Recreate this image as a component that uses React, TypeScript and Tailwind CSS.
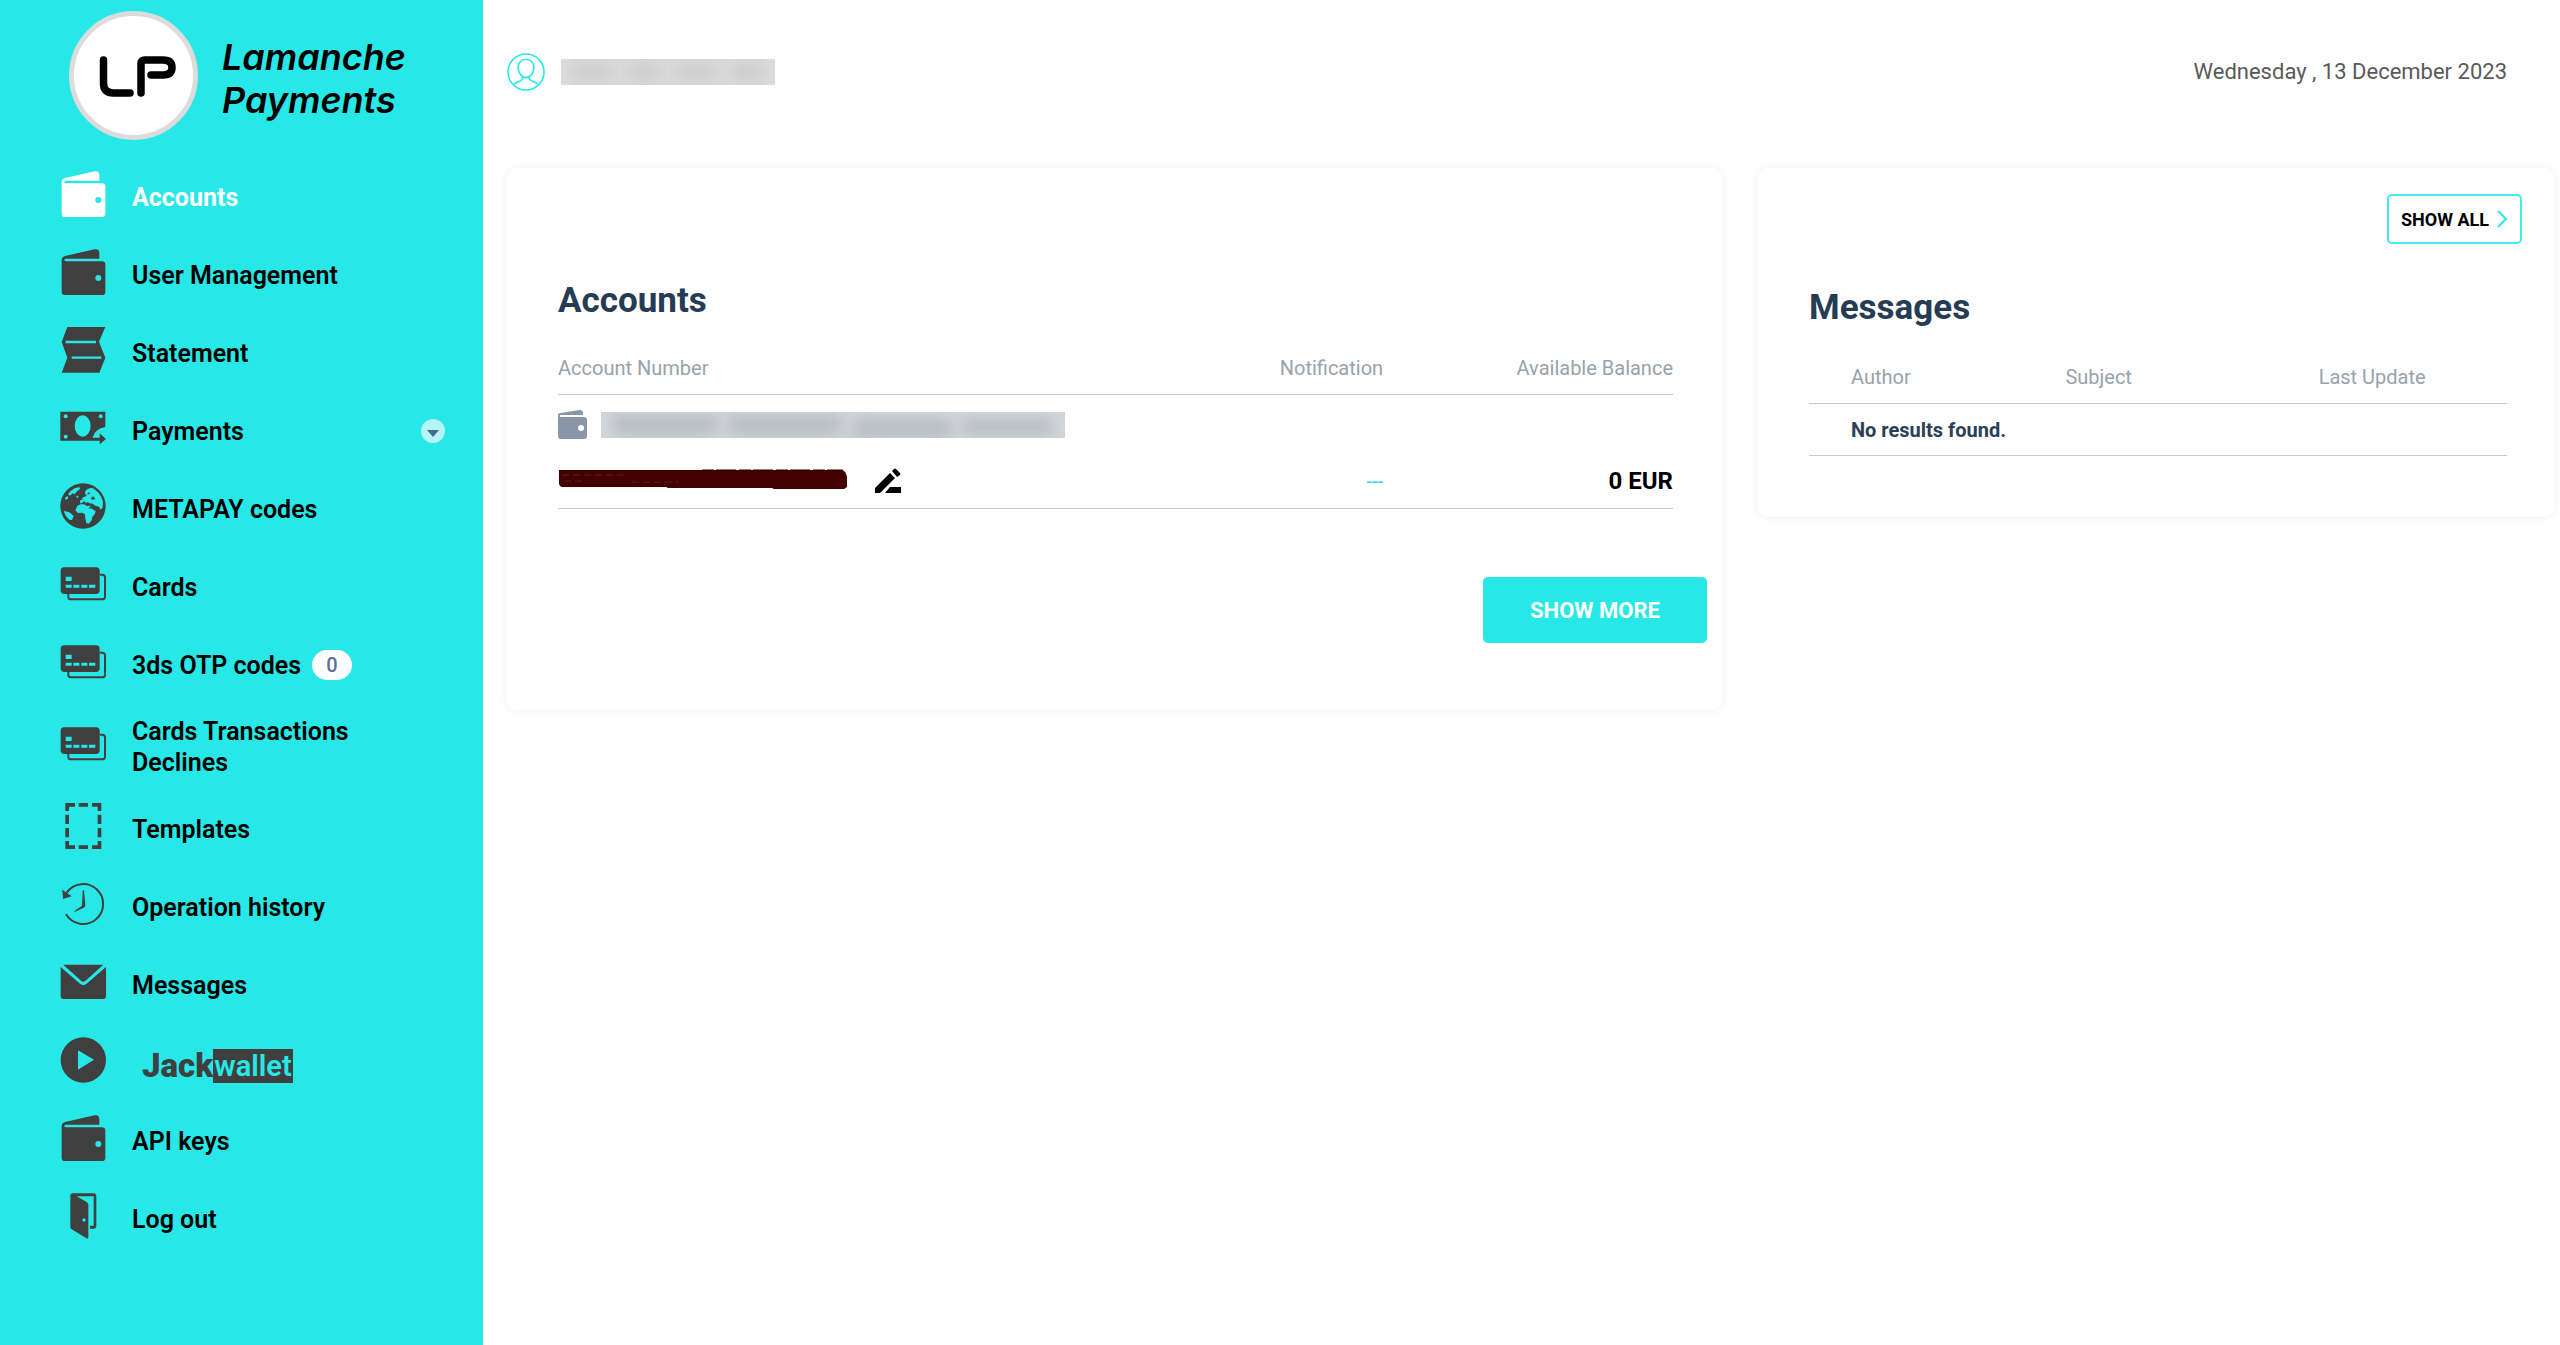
import { ReactNode } from "react";

function Svg({ children }: { children: ReactNode }) {
    return (
        <svg viewBox="0 0 138 138" className="size-full" fill="currentColor" aria-hidden="true">
            {children}
        </svg>
    );
}

function WalletIcon() {
    return (
        <Svg>
            <path
                fillRule="evenodd"
                d="M5 128V34q0-10 10-13L104 1q13-2 14 10V29H18q-5 0-5 4t5 4H126q10 0 10 10V128q0 10-10 10H15q-10 0-10-10ZM106 87a9 9 0 1 0 18 0a9 9 0 1 0-18 0Z"
            />
        </Svg>
    );
}

function StatementIcon() {
    return (
        <Svg>
            <path d="M22 0H136L117 44L136 92L118 137H5L22 92L5 45Z" />
            <path d="M17 45H108M35 92H124" stroke="#27e8e7" strokeWidth="7" />
        </Svg>
    );
}

function PaymentsIcon() {
    return (
        <Svg>
            <path d="M1 20H136V66Q106 70 97 98H119V85L138 102L119 118V107H1Z" />
            <g fill="#27e8e7">
                <ellipse cx="68" cy="63" rx="24" ry="32" />
                <circle cx="17" cy="34" r="6" />
                <circle cx="122" cy="34" r="6" />
                <circle cx="17" cy="95" r="6" />
            </g>
        </Svg>
    );
}

function GlobeIcon() {
    return (
        <Svg>
            <circle cx="69" cy="69" r="68" />
            <g fill="#27e8e7">
                {/* Europe and Asia */}
                <path d="M84 17L96 14Q122 27 129 56L128 74L122 80L117 71L106 68L98 62L88 61L84 57L78 60L72 54L66 60L60 61L61 51L68 50L66 45L77 40L83 34L90 33L87 27L80 36L75 33L76 24Z" />
                {/* Africa */}
                <path d="M52 68L64 63L76 65L80 69L92 68L99 80L107 84L104 94L97 101L95 112L86 122L79 120L76 106L75 94L66 89L54 90L46 82Z" />
                {/* South America */}
                <path d="M11 84L28 88L41 99L36 111L28 110Q15 99 11 84Z" />
                {/* North America and Greenland */}
                <path d="M24 34Q32 22 44 16L58 12L60 18L51 25L44 34L38 31L30 38Z" />
                <path d="M15 44L23 39L25 46L17 51Z" />
                <circle cx="52" cy="41" r="3" />
            </g>
            <path d="M92 45L100 40L106 48L98 51ZM85 76L91 70L103 72L101 77Z" />
        </Svg>
    );
}

function CardsIcon() {
    return (
        <Svg>
            <rect x="2" y="19" width="117" height="80" rx="11" />
            <path
                d="M119 41H127q8 0 8 8V107q0 8-8 8H33q-8 0-8-8V98"
                fill="none"
                stroke="currentColor"
                strokeWidth="6"
            />
            <path
                d="M17 47h18v13h-18zM17 71h18v9h-18zM40 71h18v9h-18zM64 71h18v9h-18zM87 71h19v9h-19z"
                fill="#27e8e7"
            />
        </Svg>
    );
}

function TemplatesIcon() {
    return (
        <Svg>
            <path d="M16 0H45V11H27V24H16ZM56 0H84V11H56ZM96 0H124V24H113V11H96ZM16 35h11v28h-11zM16 75h11v28h-11zM113 35h11v28h-11zM113 75h11v28h-11zM16 114H27V127H45V138H16ZM56 127H84V138H56ZM113 114H124V138H96V127H113Z" />
        </Svg>
    );
}

function HistoryIcon() {
    return (
        <Svg>
            <path d="M18 100A60 60 0 1 0 20 35" fill="none" stroke="currentColor" strokeWidth="6" />
            <path d="M7 26L35 46L9 54ZM68 28H72L76 72Q76 78 71 80L44 93L43 90L66 74Z" />
        </Svg>
    );
}

function MailIcon() {
    return (
        <Svg>
            <path d="M2 24L61 75Q70 82 79 75L138 24V111Q138 120 129 120H11Q2 120 2 111Z" />
            <path d="M10 17H130L76 66Q70 71 64 66Z" />
        </Svg>
    );
}

function PlayIcon() {
    return (
        <Svg>
            <circle cx="70" cy="69" r="68" />
            <path d="M54 40L102 68L54 98Z" fill="#27e8e7" />
        </Svg>
    );
}

function DoorIcon() {
    return (
        <Svg>
            <path
                fillRule="evenodd"
                d="M37 1H100q9 0 9 9V98q0 9-9 9H90V98H101V10H50L80 27q5 3 5 8V134q-2 4-6 2L35 109q-4-3-4-7V8q0-6 6-7ZM67 81a5 5 0 1 0 10 0a5 5 0 1 0-10 0Z"
            />
        </Svg>
    );
}

function JackWallet() {
    return (
        <span className="ml-2.5 flex items-end pt-1.5 text-[#3f3f3f]">
            <span className="text-[33px] leading-[34px] font-black">Jack</span>
            <span className="bg-[#3f3f3f] px-px text-[29px] leading-[34px] text-[#27e8e7]">wallet</span>
        </span>
    );
}

type Item = { label: ReactNode; icon: ReactNode; active?: boolean; badge?: string; expandable?: boolean };

const menu: Item[] = [
    { label: "Accounts", icon: <WalletIcon />, active: true },
    { label: "User Management", icon: <WalletIcon /> },
    { label: "Statement", icon: <StatementIcon /> },
    { label: "Payments", icon: <PaymentsIcon />, expandable: true },
    { label: "METAPAY codes", icon: <GlobeIcon /> },
    { label: "Cards", icon: <CardsIcon /> },
    { label: "3ds OTP codes", icon: <CardsIcon />, badge: "0" },
    { label: "Cards Transactions Declines", icon: <CardsIcon /> },
    { label: "Templates", icon: <TemplatesIcon /> },
    { label: "Operation history", icon: <HistoryIcon /> },
    { label: "Messages", icon: <MailIcon /> },
    { label: <JackWallet />, icon: <PlayIcon /> },
    { label: "API keys", icon: <WalletIcon /> },
    { label: "Log out", icon: <DoorIcon /> },
];

function Sidebar() {
    return (
        <aside className="w-[483px] shrink-0 bg-[#27e8e7]">
            <a href="#" className="flex items-center gap-6 pt-[11px] pb-[18px] pl-[69px] text-black">
                <svg viewBox="0 0 129 129" className="size-[129px]" role="img" aria-label="LP">
                    <circle cx="64.5" cy="64.5" r="62" fill="#fff" stroke="#dcdcdc" strokeWidth="5" />
                    <g fill="none" stroke="#000" strokeWidth="7.5" strokeLinecap="round">
                        <path d="M34.5 49V72Q34.500 82 44.500 82H61" />
                        <path d="M72 82V53Q72 49 76 49H94Q103 49 103 56.500T94 64H82" />
                    </g>
                </svg>
                <span className="pt-1.5 font-[Inter,sans-serif] text-[36px] leading-[43px] font-semibold italic">
                    Lamanche
                    <br />
                    Payments
                </span>
            </a>
            <nav>
                <ul>
                    {menu.map((item, i) => (
                        <li key={i} className="flex min-h-[78px] items-center pr-[38px] pl-[60px]">
                            <a
                                href="#"
                                className={
                                    item.active
                                        ? "flex flex-1 items-center py-3 text-[25px] leading-[31px] font-bold text-white"
                                        : "flex flex-1 items-center py-3 text-[25px] leading-[31px] font-semibold text-black"
                                }
                            >
                                <span
                                    className={
                                        item.active
                                            ? "mr-[26px] mb-1.5 size-[46px] shrink-0 text-white"
                                            : "mr-[26px] mb-1.5 size-[46px] shrink-0 text-[#3f3f3f]"
                                    }
                                >
                                    {item.icon}
                                </span>
                                <span className="max-w-[240px]">{item.label}</span>
                                {item.badge && (
                                    <span className="ml-[11px] rounded-full bg-white px-3.5 text-[20px] leading-[30px] font-medium text-[#5b6f9a]">
                                        {item.badge}
                                    </span>
                                )}
                            </a>
                            {item.expandable && (
                                <button
                                    type="button"
                                    aria-label="Expand payments"
                                    className="flex size-6 items-center justify-center rounded-full bg-[#b5f5f7]"
                                >
                                    <svg viewBox="0 0 12 7" className="mt-1 h-[7px] w-3" fill="#456a90">
                                        <path d="M0 0H12L6 7Z" />
                                    </svg>
                                </button>
                            )}
                        </li>
                    ))}
                </ul>
            </nav>
        </aside>
    );
}

// Masked holder name
function MaskedName() {
    return (
        <span className="flex h-[26px] w-[214px] items-center gap-4 overflow-hidden bg-[#dcdcdc] px-3">
            <span className="h-4 w-10 bg-[#c9c9c9] blur-[8px]" />
            <span className="h-4 w-8 bg-[#c9c9c9] blur-[8px]" />
            <span className="h-4 w-10 bg-[#c9c9c9] blur-[8px]" />
            <span className="h-4 w-8 bg-[#c9c9c9] blur-[8px]" />
        </span>
    );
}

// Masked account title
function MaskedTitle() {
    return (
        <span className="flex h-[26px] w-[464px] items-center gap-3 overflow-hidden bg-[#d3d6d9] px-3">
            <span className="h-5 w-[104px] bg-[#b7bdc3] blur-[7px]" />
            <span className="h-5 w-[112px] bg-[#b7bdc3] blur-[7px]" />
            <span className="mt-2 h-5 w-[98px] bg-[#b7bdc3] blur-[7px]" />
            <span className="mt-1 h-4 w-[90px] bg-[#b7bdc3] blur-[7px]" />
        </span>
    );
}

function Header() {
    return (
        <header className="flex items-center justify-between pr-12 pl-px">
            <div className="flex items-center gap-4">
                <svg viewBox="0 0 116 116" className="size-[38px]" fill="none" stroke="#27e8e7" strokeWidth="5">
                    <circle cx="58" cy="58" r="55" />
                    <path d="M58 19C72 19 82 29 82 44C82 60 71 75 58 75S34 60 34 44C34 29 44 19 58 19Z" />
                    <path d="M48 72V78Q46 83 38 86L20 95M68 72V78Q70 83 78 86L96 95" />
                </svg>
                <MaskedName />
            </div>
            <time dateTime="2023-12-13" className="text-[22px] leading-8 text-[#5a5a5a]">
                Wednesday , 13 December 2023
            </time>
        </header>
    );
}

function AccountsCard() {
    return (
        <section className="rounded-xl bg-[#fefefe] pt-[113px] pb-[67px] shadow-[0_0_8px_rgba(0,0,0,0.06)]">
            <div className="pr-[50px] pl-[52px]">
                <h2 className="text-[35px] leading-10 font-bold text-[#263c54]">Accounts</h2>
                <table className="w-full table-fixed text-left">
                    <thead>
                        <tr className="border-b border-[#c6c8ca] text-[20px] leading-[30px] text-[#98a3ac]">
                            <th className="w-[54%] pt-8 pb-[11px] font-normal">Account Number</th>
                            <th className="w-[20%] pt-8 pb-[11px] text-right font-normal">Notification</th>
                            <th className="w-[26%] pt-8 pb-[11px] text-right font-normal">Available Balance</th>
                        </tr>
                    </thead>
                    <tbody>
                        <tr className="h-[60px]">
                            <td colSpan={3}>
                                <div className="flex items-center gap-3.5">
                                    <span className="size-[29px] text-[#8896a8]">
                                        <svg viewBox="0 0 29 29" fill="currentColor" aria-hidden="true">
                                            <path
                                                fillRule="evenodd"
                                                d="M0 26V5Q0 3 2 3L22 0Q25 0 25 3V5H3Q1 5 2 7H25Q29 7 29 10V26Q29 29 26 29H3Q0 29 0 26ZM20 18a3 3 0 1 0 6 0a3 3 0 1 0-6 0Z"
                                            />
                                        </svg>
                                    </span>
                                    <MaskedTitle />
                                </div>
                            </td>
                        </tr>
                        <tr className="h-[54px] border-b border-[#c6c8ca]">
                            <td>
                                <div className="flex items-center gap-7">
                                    {/* Struck out account number */}
                                    <svg
                                        viewBox="0 0 289 20"
                                        className="mb-1 h-5 w-[289px]"
                                        fill="#430000"
                                        aria-hidden="true"
                                    >
                                        <path d="M1 1H284Q288 2 289 8V18L286 20H216L214 19H110L108 18H4Q1 17 1 14Z" />
                                        <path d="M144 1H285" stroke="#1c0000" strokeDasharray="12 2 20 3" />
                                        <path
                                            d="M4 6H70M6 12H24M74 13H120"
                                            stroke="#5a2020"
                                            strokeDasharray="7 4"
                                        />
                                    </svg>
                                    <button type="button" aria-label="Edit account" className="size-[26px]">
                                        <svg viewBox="0 0 26 26" fill="#000">
                                            <path d="M0 20L15 5L20 10L5 25H0ZM17 3L19 1Q20 0 21 1L25 5Q26 6 25 7L22 9ZM10 25L15 19H26V25Z" />
                                        </svg>
                                    </button>
                                </div>
                            </td>
                            <td className="text-right text-[20px] text-[#27d5e7]">---</td>
                            <td className="text-right text-[24px] font-bold text-black">0 EUR</td>
                        </tr>
                    </tbody>
                </table>
            </div>
            <div className="mt-[68px] flex justify-end pr-4">
                <button
                    type="button"
                    className="h-[66px] w-[224px] rounded-[5px] bg-[#27e8e7] text-[22px] font-bold text-white"
                >
                    SHOW MORE
                </button>
            </div>
        </section>
    );
}

function MessagesCard() {
    return (
        <section className="rounded-xl bg-[#fefefe] pt-[26px] pb-[61px] shadow-[0_0_8px_rgba(0,0,0,0.06)]">
            <div className="flex justify-end pr-[33px]">
                <a
                    href="#"
                    className="flex h-[50px] items-center gap-2 rounded-[5px] border-2 border-[#3eeceb] px-3 text-[18px] font-bold text-black"
                >
                    SHOW ALL
                    <svg viewBox="0 0 11 18" className="h-[18px] w-[11px]" fill="none" stroke="#27e8e7" strokeWidth="2">
                        <path d="M1 1L9 9L1 17" />
                    </svg>
                </a>
            </div>
            <div className="mt-11 pr-12 pl-[52px]">
                <h2 className="text-[35px] leading-10 font-bold text-[#263c54]">Messages</h2>
                <table className="w-full table-fixed text-left">
                    <thead>
                        <tr className="border-b border-[#c6c8ca] text-[20px] leading-[30px] text-[#98a3ac]">
                            <th className="w-[31%] pt-[34px] pb-[11px] pl-[42px] font-normal">Author</th>
                            <th className="w-[36%] pt-[34px] pb-[11px] pl-10 font-normal">Subject</th>
                            <th className="w-[33%] pt-[34px] pb-[11px] pl-[42px] font-normal">Last Update</th>
                        </tr>
                    </thead>
                    <tbody>
                        <tr className="h-[52px] border-b border-[#c6c8ca]">
                            <td colSpan={3} className="pl-[42px] text-[20px] font-bold text-[#2b4056]">
                                No results found.
                            </td>
                        </tr>
                    </tbody>
                </table>
            </div>
        </section>
    );
}

export default function App() {
    return (
        <div className="flex min-h-screen bg-[#fefefe] font-[Roboto,sans-serif]">
            <Sidebar />
            <main className="flex-1 pt-[53px] pr-[5px] pl-[23px]">
                <Header />
                <div className="mt-[77px] grid grid-cols-[1217fr_798fr] items-start gap-[34px]">
                    <AccountsCard />
                    <MessagesCard />
                </div>
            </main>
        </div>
    );
}
